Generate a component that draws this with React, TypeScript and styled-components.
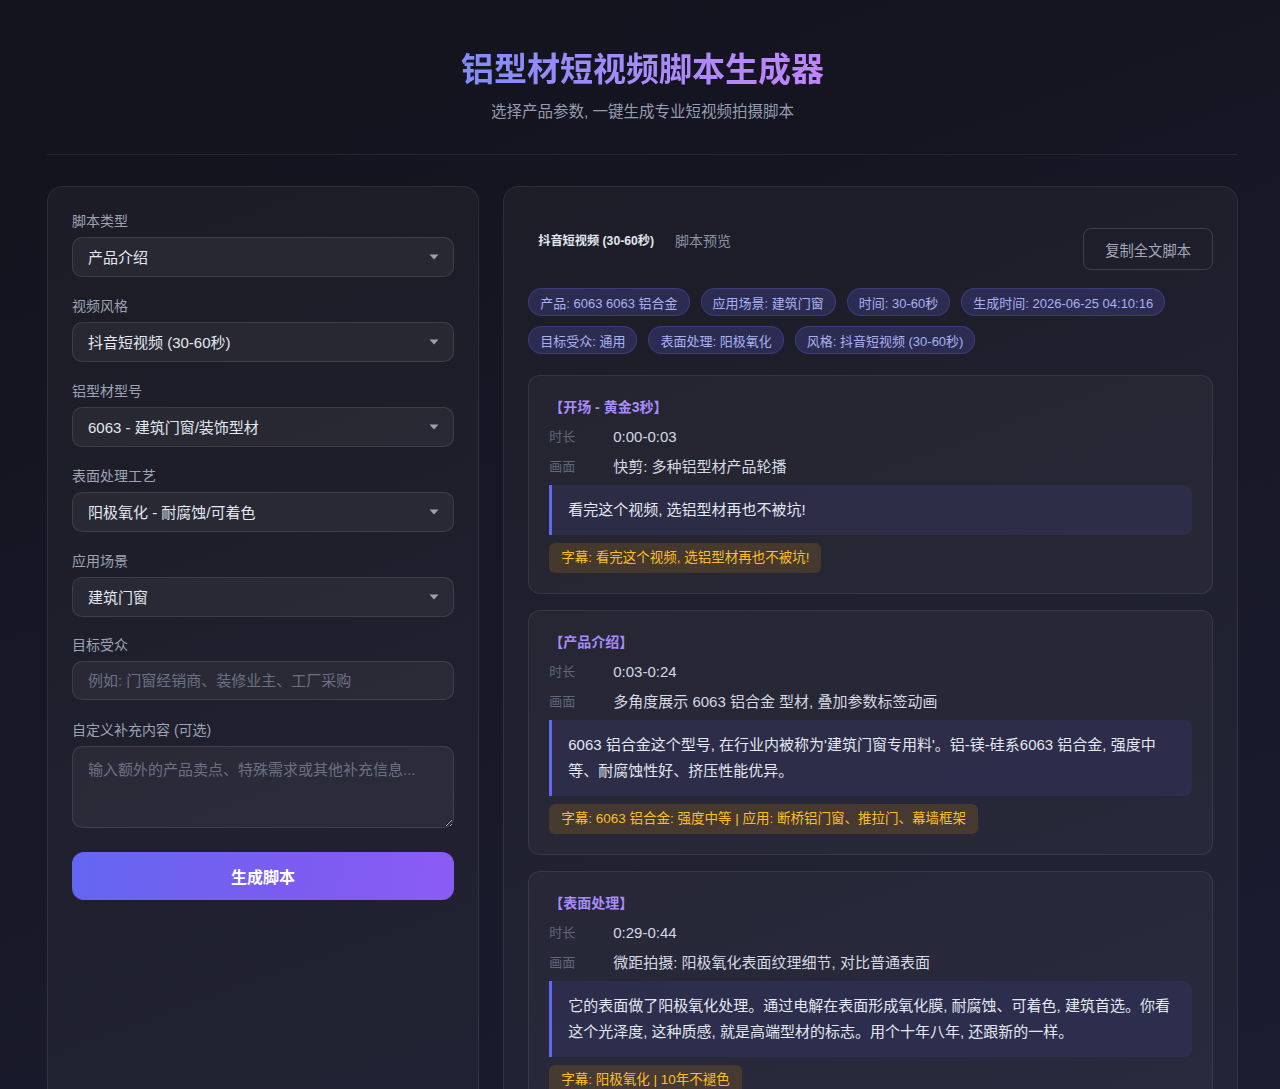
import React from 'react';
import styled, { createGlobalStyle } from 'styled-components';

const FONT = '"Liberation Sans", "Noto Sans CJK SC", sans-serif';

interface Section {
  title: string;
  time: string;
  scene: string;
  voice: string;
  caption: string;
}

const sections: Section[] = [
  {
    title: '【开场 - 黄金3秒】',
    time: '0:00-0:03',
    scene: '快剪: 多种铝型材产品轮播',
    voice: '看完这个视频, 选铝型材再也不被坑!',
    caption: '字幕: 看完这个视频, 选铝型材再也不被坑!',
  },
  {
    title: '【产品介绍】',
    time: '0:03-0:24',
    scene: '多角度展示 6063 铝合金 型材, 叠加参数标签动画',
    voice:
      "6063 铝合金这个型号, 在行业内被称为'建筑门窗专用料'。铝-镁-硅系6063 铝合金, 强度中等、耐腐蚀性好、挤压性能优异。",
    caption: '字幕: 6063 铝合金: 强度中等 | 应用: 断桥铝门窗、推拉门、幕墙框架',
  },
  {
    title: '【表面处理】',
    time: '0:29-0:44',
    scene: '微距拍摄: 阳极氧化表面纹理细节, 对比普通表面',
    voice:
      '它的表面做了阳极氧化处理。通过电解在表面形成氧化膜, 耐腐蚀、可着色, 建筑首选。你看这个光泽度, 这种质感, 就是高端型材的标志。用个十年八年, 还跟新的一样。',
    caption: '字幕: 阳极氧化 | 10年不褪色',
  },
];

const tags = [
  '产品: 6063 6063 铝合金',
  '应用场景: 建筑门窗',
  '时间: 30-60秒',
  '生成时间: 2026-06-25 04:10:16',
  '目标受众: 通用',
  '表面处理: 阳极氧化',
  '风格: 抖音短视频 (30-60秒)',
];

const selects = [
  { label: '脚本类型', value: '产品介绍' },
  { label: '视频风格', value: '抖音短视频 (30-60秒)' },
  { label: '铝型材型号', value: '6063 - 建筑门窗/装饰型材' },
  { label: '表面处理工艺', value: '阳极氧化 - 耐腐蚀/可着色' },
  { label: '应用场景', value: '建筑门窗' },
];

const Chevron = () => (
  <svg width="10" height="6" viewBox="0 0 10 6">
    <path d="M0.5 0.5 L9.5 0.5 L5 5.5 Z" fill="#9aa3b5" />
  </svg>
);

const App: React.FC = () => {
  return (
    <>
      <GlobalStyle />
      <Page>
        <Header>
          <Title>铝型材短视频脚本生成器</Title>
          <Subtitle>选择产品参数, 一键生成专业短视频拍摄脚本</Subtitle>
        </Header>
        <Layout>
          <Panel>
            {selects.map((s, i) => (
              <Field key={s.label} $space={i === selects.length - 1 ? 18 : 19}>
                <Label>{s.label}</Label>
                <SelectWrap>
                  <Select defaultValue={s.value}>
                    <option>{s.value}</option>
                  </Select>
                  <ChevronBox>
                    <Chevron />
                  </ChevronBox>
                </SelectWrap>
              </Field>
            ))}
            <Field $space={20}>
              <Label>目标受众</Label>
              <Input placeholder="例如: 门窗经销商、装修业主、工厂采购" />
            </Field>
            <Field $space={18}>
              <Label>自定义补充内容 (可选)</Label>
              <TextArea placeholder="输入额外的产品卖点、特殊需求或其他补充信息..." />
            </Field>
            <GenerateButton>生成脚本</GenerateButton>
          </Panel>

          <Panel>
            <PreviewHeader>
              <PreviewTitle>
                <StyleBadge>抖音短视频 (30-60秒)</StyleBadge>
                <PreviewLabel>脚本预览</PreviewLabel>
              </PreviewTitle>
              <CopyButton>复制全文脚本</CopyButton>
            </PreviewHeader>
            <Tags>
              {tags.map((t) => (
                <Tag key={t}>{t}</Tag>
              ))}
            </Tags>
            <Sections>
              {sections.map((s) => (
                <Card key={s.title}>
                  <CardTitle>{s.title}</CardTitle>
                  <Row>
                    <RowLabel>时长</RowLabel>
                    <RowValue>{s.time}</RowValue>
                  </Row>
                  <Row>
                    <RowLabel>画面</RowLabel>
                    <RowValue>{s.scene}</RowValue>
                  </Row>
                  <Voice>{s.voice}</Voice>
                  <Caption>{s.caption}</Caption>
                </Card>
              ))}
            </Sections>
          </Panel>
        </Layout>
      </Page>
    </>
  );
};

const GlobalStyle = createGlobalStyle`
  html, body {
    margin: 0;
    padding: 0;
    min-height: 100%;
    background: linear-gradient(160deg, #13131d 0%, #171726 50%, #1b1c30 100%);
    background-attachment: fixed;
    color: #e2e8f0;
    font-family: ${FONT};
  }
  * { box-sizing: border-box; }
`;

const Page = styled.div`
  padding: 48px 42px 40px 47px;
  min-height: 100vh;
`;

const Header = styled.header`
  text-align: center;
  padding-bottom: 30px;
  border-bottom: 1px solid rgba(255, 255, 255, 0.07);
`;

const Title = styled.h1`
  margin: 0;
  font-size: 33px;
  line-height: 44px;
  font-weight: 700;
  background: linear-gradient(90deg, #818cf8 0%, #a78bfa 50%, #c084fc 100%);
  -webkit-background-clip: text;
  background-clip: text;
  color: transparent;
  display: inline-block;
`;

const Subtitle = styled.p`
  margin: 8px 0 0;
  font-size: 15.5px;
  line-height: 24px;
  color: #949cb0;
`;

const Layout = styled.div`
  display: grid;
  grid-template-columns: 1fr 1.7fr;
  gap: 24px;
  margin-top: 31px;
`;

const Panel = styled.section`
  background: rgba(255, 255, 255, 0.035);
  border: 1px solid rgba(255, 255, 255, 0.08);
  border-radius: 16px;
  padding: 24px;
`;

const Field = styled.div<{ $space: number }>`
  margin-bottom: ${(p) => p.$space}px;
`;

const Label = styled.div`
  font-size: 14px;
  line-height: 20px;
  color: #9ca3b4;
  margin-bottom: 6px;
`;

const SelectWrap = styled.div`
  position: relative;
`;

const fieldBox = `
  width: 100%;
  background: rgba(255, 255, 255, 0.05);
  border: 1px solid rgba(255, 255, 255, 0.1);
  border-radius: 10px;
  font-family: ${FONT};
  font-size: 15px;
  color: #e2e8f0;
  outline: none;
`;

const Select = styled.select`
  ${fieldBox}
  height: 40px;
  padding: 0 15px;
  appearance: none;
  -webkit-appearance: none;
`;

const ChevronBox = styled.span`
  position: absolute;
  right: 15px;
  top: 50%;
  transform: translateY(-50%);
  display: flex;
  pointer-events: none;
`;

const Input = styled.input`
  ${fieldBox}
  height: 39px;
  padding: 0 15px;
  &::placeholder {
    color: #6b7184;
  }
`;

const TextArea = styled.textarea`
  ${fieldBox}
  display: block;
  height: 82px;
  padding: 12px 15px;
  line-height: 22px;
  resize: vertical;
  &::placeholder {
    color: #6b7184;
  }
`;

const GenerateButton = styled.button`
  width: 100%;
  height: 48px;
  margin-top: 6px;
  border: none;
  border-radius: 12px;
  background: linear-gradient(100deg, #6366f1 0%, #7c5cf0 60%, #8b5cf6 100%);
  color: #fff;
  font-family: ${FONT};
  font-size: 16px;
  font-weight: 700;
  cursor: pointer;
`;

const PreviewHeader = styled.div`
  display: flex;
  justify-content: space-between;
  align-items: flex-start;
  height: 59px;
  margin-bottom: 18px;
`;

const PreviewTitle = styled.div`
  display: flex;
  align-items: center;
  margin-top: 20px;
`;

const StyleBadge = styled.span`
  padding: 0 10px;
  font-size: 12.2px;
  line-height: 20px;
  font-weight: 700;
  color: #e2e8f0;
  margin-right: 11px;
`;

const PreviewLabel = styled.span`
  font-size: 14px;
  line-height: 20px;
  color: #8b92a5;
`;

const CopyButton = styled.button`
  margin-top: 17px;
  height: 42px;
  padding: 0 21px;
  background: transparent;
  border: 1px solid rgba(255, 255, 255, 0.14);
  border-radius: 8px;
  color: #a3a9b8;
  font-family: ${FONT};
  font-size: 14.3px;
  cursor: pointer;
`;

const Tags = styled.div`
  display: flex;
  flex-wrap: wrap;
  gap: 10px 11px;
  margin-bottom: 21px;
`;

const Tag = styled.span`
  height: 28px;
  padding: 0 11px;
  display: inline-flex;
  align-items: center;
  border-radius: 14px;
  background: rgba(99, 102, 241, 0.2);
  border: 1px solid rgba(99, 102, 241, 0.28);
  color: #a9b1f0;
  font-size: 13px;
`;

const Sections = styled.div`
  display: flex;
  flex-direction: column;
  gap: 16px;
`;

const Card = styled.article`
  background: rgba(255, 255, 255, 0.03);
  border: 1px solid rgba(255, 255, 255, 0.08);
  border-radius: 12px;
  padding: 20px;
`;

const CardTitle = styled.div`
  font-size: 14px;
  line-height: 22px;
  font-weight: 700;
  color: #a78bfa;
  margin-bottom: 8px;
`;

const Row = styled.div`
  display: flex;
  align-items: center;
  height: 22.5px;
  margin-bottom: 7px;
`;

const RowLabel = styled.span`
  width: 64px;
  flex-shrink: 0;
  font-size: 13px;
  line-height: 22px;
  color: #5f677a;
`;

const RowValue = styled.span`
  font-size: 15px;
  line-height: 22px;
  color: #d4d9e2;
`;

const Voice = styled.div`
  background: rgba(99, 102, 241, 0.1);
  border-left: 3px solid #6366f1;
  border-radius: 0 8px 8px 0;
  padding: 12px 16px;
  font-size: 15px;
  line-height: 26px;
  color: #e2e8f0;
`;

const Caption = styled.div`
  display: inline-block;
  margin-top: 8px;
  padding: 6px 12px;
  border-radius: 6px;
  background: rgba(245, 158, 11, 0.15);
  color: #fbbf24;
  font-size: 13.5px;
  line-height: 18px;
`;

export default App;
